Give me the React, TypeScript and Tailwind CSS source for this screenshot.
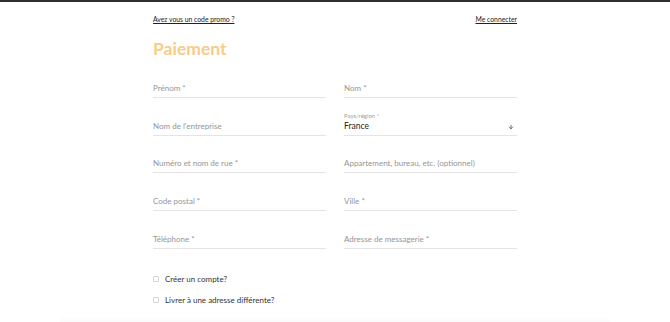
import { ArrowDown } from "lucide-react";

const rows: [string, string][] = [
  ["Prénom *", "Nom *"],
  ["Nom de l'entreprise", "__country__"],
  ["Numéro et nom de rue *", "Appartement, bureau, etc. (optionnel)"],
  ["Code postal *", "Ville *"],
  ["Téléphone *", "Adresse de messagerie *"],
];

function Field({ label }: { label: string }) {
  if (label === "__country__") {
    return (
      <div className="flex flex-col border-b border-[#e4e4e4] h-[25px] justify-end">
        <span className="text-[6px] leading-[8px] text-[#a0a0a0]">Pays/région *</span>
        <div className="flex items-center justify-between pb-[3px]">
          <span className="text-[8.5px] leading-[12px] text-[#222]">France</span>
          <ArrowDown className="w-[6px] h-[6px] text-[#444] mr-[3px] mt-[3px]" strokeWidth={3} />
        </div>
      </div>
    );
  }
  return (
    <div className="flex items-end border-b border-[#e4e4e4] h-[25px] pb-[3px]">
      <span className="text-[8px] leading-[12px] text-[#959595]">{label}</span>
    </div>
  );
}

export default function App() {
  return (
    <div className="w-[670px] h-[322px] bg-white overflow-hidden relative" style={{ fontFamily: "Lato, 'Noto Sans', sans-serif" }}>
      <div className="h-[2px] bg-[#2e2e2e]" />
      <div className="w-[364px] mx-auto pt-[13px]">
        <div className="flex justify-between text-[6.8px] text-[#222] leading-[8px]">
          <a className="underline">Avez vous un code promo ?</a>
          <a className="underline">Me connecter</a>
        </div>
        <h1 className="mt-[16px] text-[17.5px] font-bold text-[#f7cd85] leading-[20px]">Paiement</h1>
        <div className="mt-[14px] grid grid-cols-2 gap-x-[18px] gap-y-[12.7px]">
          {rows.map(([a, b]) => (
            <>
              <Field key={a} label={a} />
              <Field key={b} label={b} />
            </>
          ))}
        </div>
        <div className="mt-[25px] flex flex-col gap-[11px]">
          {["Créer un compte?", "Livrer à une adresse différente?"].map((t) => (
            <label key={t} className="flex items-center gap-[6px] text-[8px] text-[#333] leading-[10px]">
              <span className="w-[6px] h-[6px] border border-[#d4d4d4] rounded-[1px]" />
              {t}
            </label>
          ))}
        </div>
      </div>
      <div className="absolute left-[60px] right-[60px] bottom-0 h-[6px] bg-gradient-to-b from-white to-[#fafafa]" />
    </div>
  );
}
